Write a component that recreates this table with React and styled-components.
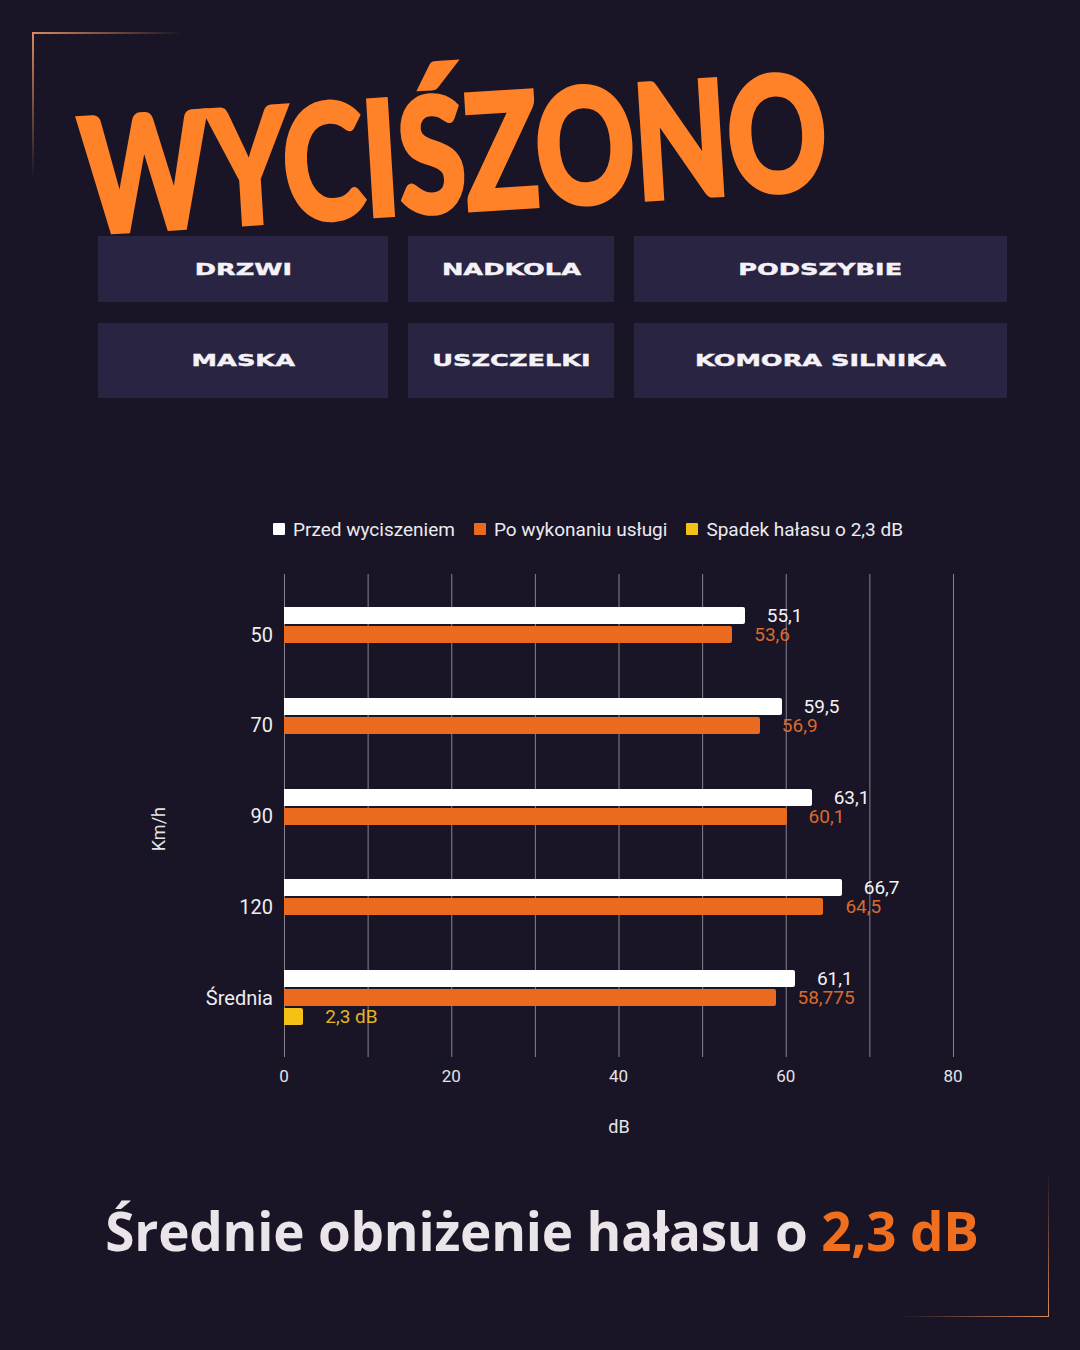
import React from 'react';
import styled, { createGlobalStyle, css } from 'styled-components';

const Global = createGlobalStyle`
  html, body { margin: 0; padding: 0; background: #1a1526; }
  body { font-family: Roboto, "Noto Sans", sans-serif; }
  * { box-sizing: border-box; }
`;

const Page = styled.div`
  position: relative;
  width: 1080px;
  height: 1350px;
  overflow: hidden;
  background: #1a1526;
  display: flex;
  flex-direction: column;
`;

const lineColor = '#d98a5c';

const Corner = styled.div`
  position: absolute;
  width: 150px;
  height: 146px;
  pointer-events: none;
  &::before, &::after { content: ''; position: absolute; }
  ${p => p.$pos === 'tl' ? css`
    top: 32px; left: 32px;
    &::before { top: 0; left: 0; width: 100%; height: 1.5px; background: linear-gradient(to right, ${lineColor}, rgba(217,138,92,0)); }
    &::after { top: 0; left: 0; width: 1.5px; height: 100%; background: linear-gradient(to bottom, ${lineColor}, rgba(217,138,92,0)); }
  ` : css`
    bottom: 33px; right: 31px;
    &::before { bottom: 0; right: 0; width: 100%; height: 1.5px; background: linear-gradient(to left, ${lineColor}, rgba(217,138,92,0)); }
    &::after { bottom: 0; right: 0; width: 1.5px; height: 100%; background: linear-gradient(to top, ${lineColor}, rgba(217,138,92,0)); }
  `}
`;

const TitleArea = styled.header`
  height: 236px;
  display: flex;
  align-items: flex-end;
  padding-left: 84px;
  position: relative;
  z-index: 2;
`;

const Title = styled.h1`
  margin: 0 0 -4px;
  font-family: Lato, "Noto Sans", sans-serif;
  font-weight: 900;
  font-size: 160px;
  line-height: 136px;
  color: #ff8229;
  letter-spacing: -2px;
  white-space: nowrap;
  transform-origin: left bottom;
  transform: rotate(-3.5deg) scaleX(0.77);
  -webkit-text-stroke: 4px #ff8229;
`;

const Chips = styled.div`
  display: grid;
  grid-template-columns: 290px 206px 373px;
  grid-template-rows: 66px 75px;
  gap: 21px 20px;
  margin-left: 98px;
  position: relative;
  z-index: 1;
`;

const Chip = styled.div`
  background: #2a2443;
  display: flex;
  align-items: center;
  justify-content: center;
`;

const ChipText = styled.span`
  display: inline-block;
  font-family: "DejaVu Sans", Verdana, sans-serif;
  font-weight: 700;
  font-size: 16px;
  letter-spacing: 0;
  color: #f4f2f6;
  transform: scaleX(1.6);
  white-space: nowrap;
  -webkit-text-stroke: 0.4px #f4f2f6;
`;

const Legend = styled.div`
  display: flex;
  align-items: center;
  margin: 121px 0 0 273px;
  height: 20px;
  gap: 19px;
`;

const LegendItem = styled.div`
  display: flex;
  align-items: center;
  gap: 8px;
  font-size: 19px;
  color: #ecebef;
  white-space: nowrap;
`;

const Swatch = styled.span`
  width: 12px;
  height: 12px;
  border-radius: 1px;
  background: ${p => p.$color};
`;

const ChartRow = styled.div`
  display: flex;
  margin: 35px 0 0 143px;
`;

const AxisTitle = styled.div`
  width: 30px;
  display: flex;
  align-items: center;
  justify-content: center;
  padding-top: 28px;
  font-size: 18px;
  color: #e4e3e8;
  span { writing-mode: vertical-rl; transform: rotate(180deg); }
`;

const Categories = styled.div`
  width: 100px;
  margin-right: 11px;
  display: flex;
  flex-direction: column;
  gap: 35.75px;
  padding: 33px 0 32px;
`;

const Category = styled.div`
  height: 55px;
  display: flex;
  align-items: center;
  justify-content: flex-end;
  font-size: 20px;
  color: #eeedf1;
`;

const Plot = styled.div`
  width: 670px;
  height: 483px;
  display: flex;
  flex-direction: column;
  gap: 35.75px;
  padding: 33px 0 32px;
  background-image: linear-gradient(to right, #85828d 1px, transparent 1px);
  background-size: 83.625px 100%;
`;

const Group = styled.div`
  height: 55px;
  display: flex;
  flex-direction: column;
  gap: 2px;
`;

const BarRow = styled.div`
  height: 17px;
  display: flex;
  align-items: center;
`;

const Bar = styled.div`
  height: 17px;
  border-radius: 0 2px 2px 0;
  background: ${p => p.$color};
  flex-shrink: 0;
`;

const Value = styled.span`
  margin-left: 22px;
  font-size: 19px;
  line-height: 17px;
  color: ${p => p.$color};
  white-space: nowrap;
`;

const Ticks = styled.div`
  display: flex;
  margin: 9px 0 0 200.4px;
`;

const Tick = styled.div`
  width: 167.25px;
  text-align: center;
  font-size: 17px;
  line-height: 20px;
  color: #e4e3e8;
`;

const XTitle = styled.div`
  width: 670px;
  margin: 31px 0 0 284px;
  text-align: center;
  font-size: 18px;
  line-height: 20px;
  color: #e4e3e8;
`;

const Summary = styled.p`
  margin: 63px 0 0;
  text-align: center;
  padding-left: 4px;
  font-family: "Open Sans", "Noto Sans", sans-serif;
  font-weight: 700;
  font-size: 53px;
  line-height: 62px;
  color: #ebe5ea;
  letter-spacing: -0.2px;
`;

const Accent = styled.span`
  color: #f06f1e;
`;

const WHITE = '#ffffff';
const ORANGE = '#ea6a1f';
const ORANGE_TXT = '#d96a2c';
const YELLOW = '#f5c116';
const YELLOW_TXT = '#e3b524';
const SCALE = 8.3625;

const data = [
  { label: '50', before: 55.1, bt: '55,1', after: 53.6, at: '53,6' },
  { label: '70', before: 59.5, bt: '59,5', after: 56.9, at: '56,9' },
  { label: '90', before: 63.1, bt: '63,1', after: 60.1, at: '60,1' },
  { label: '120', before: 66.7, bt: '66,7', after: 64.5, at: '64,5' },
  { label: 'Średnia', before: 61.1, bt: '61,1', after: 58.775, at: '58,775', drop: 2.3, dt: '2,3 dB' },
];

const chips = ['DRZWI', 'NADKOLA', 'PODSZYBIE', 'MASKA', 'USZCZELKI', 'KOMORA SILNIKA'];

export default function App() {
  return (
    <Page>
      <Global />
      <Corner $pos="tl" />
      <Corner $pos="br" />
      <TitleArea>
        <Title>WYCIŚZONO</Title>
      </TitleArea>
      <Chips>
        {chips.map(c => (
          <Chip key={c}><ChipText>{c}</ChipText></Chip>
        ))}
      </Chips>
      <Legend>
        <LegendItem><Swatch $color={WHITE} />Przed wyciszeniem</LegendItem>
        <LegendItem><Swatch $color={ORANGE} />Po wykonaniu usługi</LegendItem>
        <LegendItem><Swatch $color={YELLOW} />Spadek hałasu o 2,3 dB</LegendItem>
      </Legend>
      <ChartRow>
        <AxisTitle><span>Km/h</span></AxisTitle>
        <Categories>
          {data.map(d => <Category key={d.label}>{d.label}</Category>)}
        </Categories>
        <Plot>
          {data.map(d => (
            <Group key={d.label}>
              <BarRow>
                <Bar $color={WHITE} style={{ width: d.before * SCALE }} />
                <Value $color="#f4f3f6">{d.bt}</Value>
              </BarRow>
              <BarRow>
                <Bar $color={ORANGE} style={{ width: d.after * SCALE }} />
                <Value $color={ORANGE_TXT}>{d.at}</Value>
              </BarRow>
              <BarRow>
                {d.drop ? (
                  <>
                    <Bar $color={YELLOW} style={{ width: d.drop * SCALE }} />
                    <Value $color={YELLOW_TXT}>{d.dt}</Value>
                  </>
                ) : null}
              </BarRow>
            </Group>
          ))}
        </Plot>
      </ChartRow>
      <Ticks>
        {[0, 20, 40, 60, 80].map(t => <Tick key={t}>{t}</Tick>)}
      </Ticks>
      <XTitle>dB</XTitle>
      <Summary>Średnie obniżenie hałasu o <Accent>2,3 dB</Accent></Summary>
    </Page>
  );
}
